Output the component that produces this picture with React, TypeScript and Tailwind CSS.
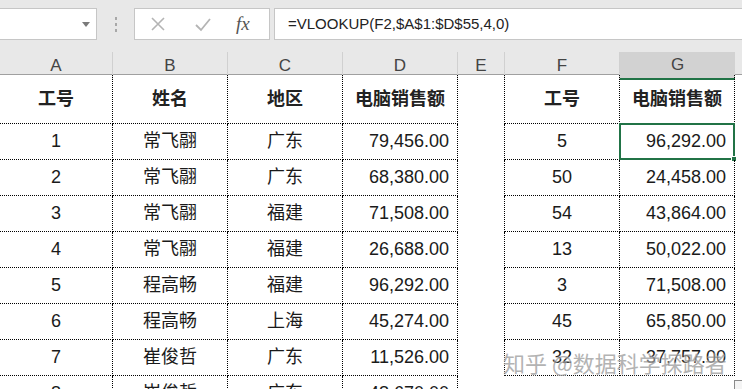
import React from 'react';

const font = { fontFamily: '"Liberation Sans", "Noto Sans CJK SC", sans-serif' };

const gridCols = "grid grid-cols-[113px_115px_115px_115px_47px_115px_115px_7px]";

const leftRows: [string, string, string, string][] = [
  ["1", "常飞翮", "广东", "79,456.00"],
  ["2", "常飞翮", "广东", "68,380.00"],
  ["3", "常飞翮", "福建", "71,508.00"],
  ["4", "常飞翮", "福建", "26,688.00"],
  ["5", "程高畅", "福建", "96,292.00"],
  ["6", "程高畅", "上海", "45,274.00"],
  ["7", "崔俊哲", "广东", "11,526.00"],
  ["8", "崔俊哲", "广东", "48,670.00"],
];

const rightRows: [string, string][] = [
  ["5", "96,292.00"],
  ["50", "24,458.00"],
  ["54", "43,864.00"],
  ["13", "50,022.00"],
  ["3", "71,508.00"],
  ["45", "65,850.00"],
  ["32", "37,757.00"],
];

const cell = "border-r border-b border-dotted border-black flex items-center";

const Toolbar = () => (
  <div className="h-[51px] bg-[#e8e8e8] flex items-start pt-[8px]">
    <div className="w-[98px] h-[32px] -ml-[1px] bg-white border border-[#c6c6c6] relative">
      <svg className="absolute left-[82px] top-[13px]" width="8" height="5" viewBox="0 0 8 5">
        <path d="M0 0 L8 0 L4 5 Z" fill="#7a7a7a" />
      </svg>
    </div>
    <div className="w-[37px] h-[32px] flex flex-col items-center justify-center gap-[3px]">
      <div className="w-[2px] h-[3px] bg-[#a8a8a8]" />
      <div className="w-[2px] h-[3px] bg-[#a8a8a8]" />
      <div className="w-[2px] h-[3px] bg-[#a8a8a8]" />
    </div>
    <div className="w-[136px] h-[32px] bg-white border border-[#c6c6c6] flex items-center">
      <svg className="ml-[15px]" width="16" height="16" viewBox="0 0 16 16">
        <path d="M2 2 L14 14 M14 2 L2 14" stroke="#b4b4b4" strokeWidth="1.6" />
      </svg>
      <svg className="ml-[28px]" width="18" height="16" viewBox="0 0 18 16">
        <path d="M2 9 L7 14 L16 3" stroke="#b4b4b4" strokeWidth="1.8" fill="none" />
      </svg>
      <span className="ml-[24px] text-[19px] italic text-[#555]" style={{ fontFamily: '"Liberation Serif", serif' }}>fx</span>
    </div>
    <div className="flex-1 ml-[4px] h-[32px] bg-white border border-[#c6c6c6] border-r-0 flex items-center pl-[13px]">
      <span className="text-[15px] text-[#222]" style={font}>=VLOOKUP(F2,$A$1:$D$55,4,0)</span>
    </div>
  </div>
);

const ColumnHeaders = () => (
  <div className={`${gridCols} h-[24px] bg-[#e8e8e8] border-b border-[#a0a0a0]`} style={font}>
    {["A", "B", "C", "D", "E", "F"].map((l) => (
      <div key={l} className="border-r border-[#d0d0d0] flex items-center justify-center text-[17px] text-[#444] mt-[1px]">
        {l}
      </div>
    ))}
    <div className="bg-[#d2d2d2] border-b-2 border-[#217346] flex items-center justify-center text-[17px] text-[#444] mt-[1px]">
      G
    </div>
    <div />
  </div>
);

export default function App() {
  return (
    <div className="w-[742px] h-[389px] overflow-hidden bg-white relative" style={font}>
      <Toolbar />
      <ColumnHeaders />
      {/* header row */}
      <div className={`${gridCols} h-[49px] text-[18px] font-bold text-[#222]`}>
        <div className={`${cell} justify-center`}>工号</div>
        <div className={`${cell} justify-center`}>姓名</div>
        <div className={`${cell} justify-center`}>地区</div>
        <div className={`${cell} justify-center`}>电脑销售额</div>
        <div className="border-r border-dotted border-black" />
        <div className={`${cell} justify-center`}>工号</div>
        <div className={`${cell} justify-center`}>电脑销售额</div>
        <div />
      </div>
      {leftRows.map((r, i) => {
        const right = rightRows[i];
        return (
          <div key={i} className={`${gridCols} h-[36px] text-[18px] text-[#1a1a1a]`}>
            <div className={`${cell} justify-center`}>{r[0]}</div>
            <div className={`${cell} justify-center`}>{r[1]}</div>
            <div className={`${cell} justify-center`}>{r[2]}</div>
            <div className={`${cell} justify-end pr-[8px]`}>{r[3]}</div>
            <div className={right ? "border-r border-dotted border-black" : ""} />
            {right ? (
              <>
                <div className={`${cell} justify-center`}>{right[0]}</div>
                <div className={`${cell} justify-end pr-[8px] relative`}>
                  {right[1]}
                  {i === 0 && (
                    <div className="absolute -left-[1px] -top-[1px] -right-[1px] -bottom-[1px] border-2 border-[#217346]">
                      <div className="absolute -right-[4px] -bottom-[4px] w-[6px] h-[6px] bg-[#217346] border border-white" />
                    </div>
                  )}
                </div>
              </>
            ) : (
              <>
                <div />
                <div />
              </>
            )}
            <div />
          </div>
        );
      })}
      {/* quick analysis icon */}
      <div className="absolute left-[734px] top-[380px] w-[10px] h-[10px] border border-[#8a8a8a] bg-[#f4f4f4]" />
      {/* watermark */}
      <div
        className="absolute left-[503px] top-[346px] text-[22px] text-[#9a9a9a] opacity-75 whitespace-nowrap"
        style={{ textShadow: '0 0 2px #fff, 0 0 2px #fff', fontFamily: '"Noto Sans CJK SC", sans-serif' }}
      >
        知乎 @数据科学探路者
      </div>
    </div>
  );
}
